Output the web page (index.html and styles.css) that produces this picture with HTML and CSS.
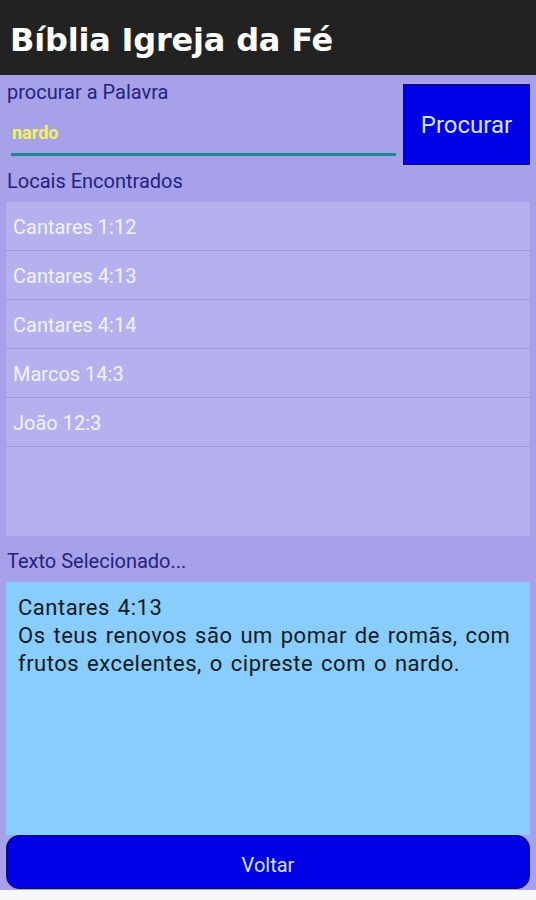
FILE: index.html
```html
<!DOCTYPE html>
<html lang="pt">
<head>
    <meta charset="UTF-8">
    <meta name="viewport" content="width=device-width, initial-scale=1.0">
    <title>Bíblia Igreja da Fé</title>
    <link rel="stylesheet" href="styles.css">
</head>
<body>
    <div class="app">
        <header class="top-bar">
            <h1>Bíblia Igreja da Fé</h1>
        </header>
        <main class="content">
            <div class="search-row">
                <div class="search-field">
                    <label for="palavra">procurar a Palavra</label>
                    <input type="text" id="palavra" value="nardo">
                </div>
                <button class="search-btn">Procurar</button>
            </div>
            <p class="section-label">Locais Encontrados</p>
            <ul class="result-list">
                <li>Cantares 1:12</li>
                <li>Cantares 4:13</li>
                <li>Cantares 4:14</li>
                <li>Marcos 14:3</li>
                <li>João 12:3</li>
            </ul>
            <p class="section-label selected-label">Texto Selecionado...</p>
            <div class="verse-box">
                Cantares 4:13<br>
                Os teus renovos são um pomar de romãs, com frutos excelentes, o cipreste com o nardo.
            </div>
            <button class="back-btn">Voltar</button>
        </main>
        <div class="bottom-strip"></div>
    </div>
</body>
</html>
```

FILE: styles.css
```css
body {
    margin: 0;
    font-family: Roboto, "Liberation Sans", sans-serif;
    background-color: #a7a1ea;
}
.app {
    height: 900px;
    display: flex;
    flex-direction: column;
}
.top-bar {
    height: 75px;
    background-color: #222222;
    display: flex;
    align-items: center;
    padding: 4px 0 0 10px;
    box-sizing: border-box;
}
.top-bar h1 {
    margin: 0;
    color: #ffffff;
    font-family: "DejaVu Sans", Lato, sans-serif;
    font-weight: 700;
    font-size: 32px;
    letter-spacing: -0.2px;
}
.content {
    flex: 1;
    display: flex;
    flex-direction: column;
    padding: 0 6px 1px 6px;
}
.search-row {
    display: flex;
    gap: 7px;
    padding-top: 6px;
}
.search-field {
    flex: 1;
    display: flex;
    flex-direction: column;
}
.search-field label {
    color: #24237f;
    font-size: 20px;
    line-height: 22px;
    margin-left: 1px;
}
.search-field input {
    margin: 15px 0 0 5px;
    background: transparent;
    border: none;
    border-bottom: 3px solid #1f8896;
    color: #f4f25a;
    font-family: Roboto, "Liberation Sans", sans-serif;
    font-weight: 700;
    font-size: 18px;
    padding: 4px 1px 10px;
    outline: none;
}
.search-btn {
    width: 127px;
    height: 81px;
    margin-top: 3px;
    background-color: #0000e6;
    border: 1px solid #101050;
    color: #d4e2ff;
    font-family: Roboto, "Liberation Sans", sans-serif;
    font-size: 24px;
}
.section-label {
    margin: 5px 0 0 1px;
    color: #24237f;
    font-size: 20px;
    line-height: 22px;
    height: 32px;
}
.result-list {
    list-style: none;
    margin: 0;
    padding: 0;
    height: 334px;
    background-color: #b5b1ee;
}
.result-list li {
    height: 48px;
    line-height: 50px;
    border-bottom: 1px solid #9f9ade;
    padding-left: 7px;
    color: #f2f2ff;
    font-size: 20px;
}
.selected-label {
    margin-top: 14px;
    height: 32px;
}
.verse-box {
    flex: 1;
    background-color: #88cdfb;
    padding: 12px 6px 0 12px;
    color: #141a24;
    font-size: 22px;
    letter-spacing: 0.5px;
    word-spacing: 2px;
    line-height: 28px;
}
.back-btn {
    height: 54px;
    padding-top: 6px;
    background-color: #0000e6;
    border: 1px solid #101050;
    border-radius: 13px;
    color: #d4e2ff;
    font-family: Roboto, "Liberation Sans", sans-serif;
    font-size: 20px;
}
.bottom-strip {
    height: 10px;
    background-color: #f7f7f9;
}
```
